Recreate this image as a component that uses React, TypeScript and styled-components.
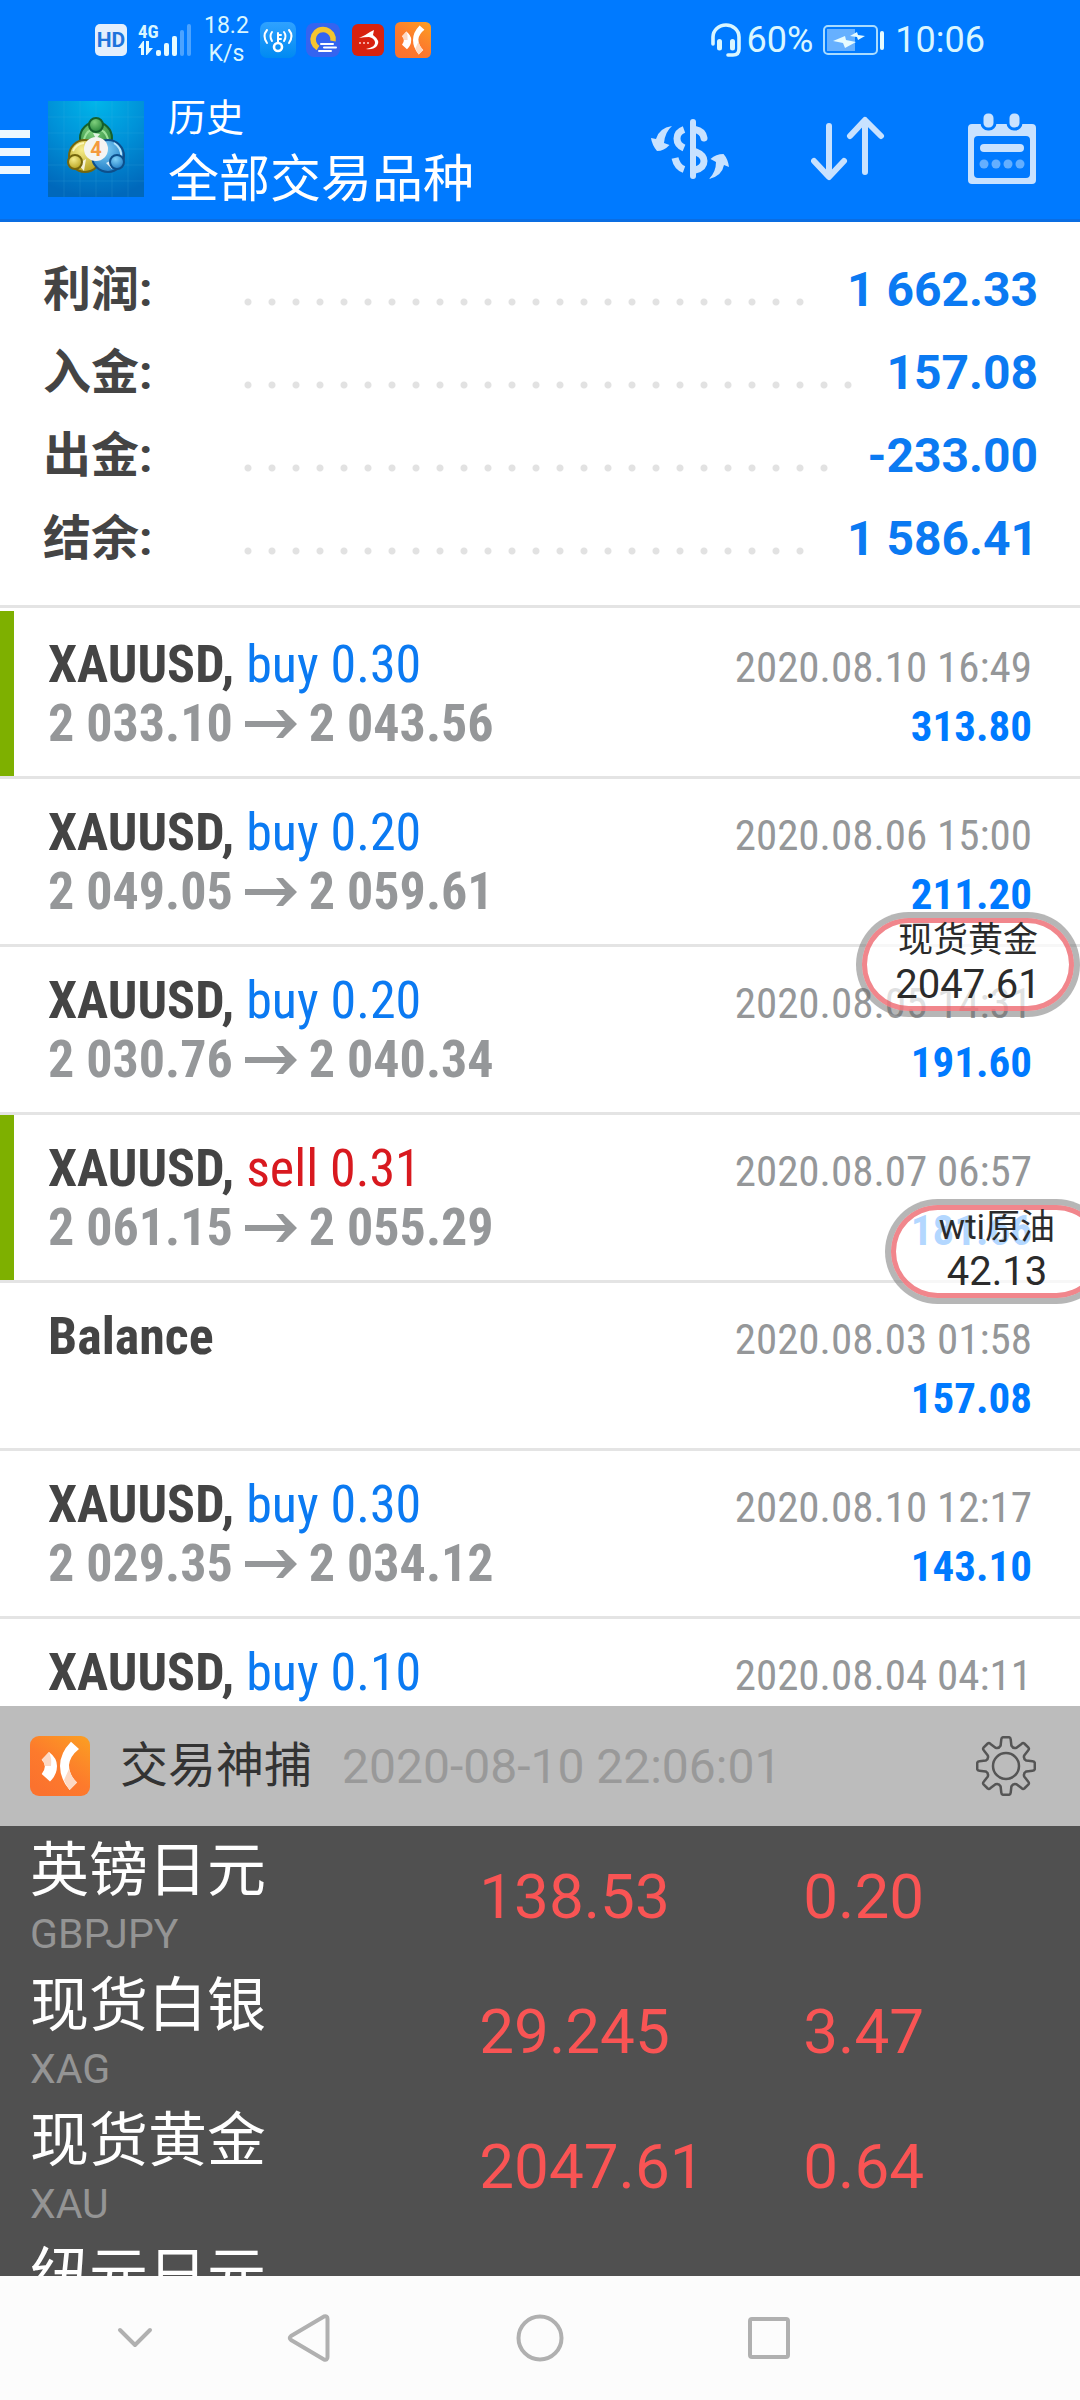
import React from 'react';
import styled, { createGlobalStyle } from 'styled-components';

const SANS = `Roboto, "Noto Sans CJK SC", sans-serif`;
const CONDENSED = `"Roboto Condensed", "Liberation Sans Narrow", Roboto, "Noto Sans CJK SC", sans-serif`;
const BLUE = '#007aff';

const Global = createGlobalStyle`
  * { box-sizing: border-box; }
  body { margin: 0; background: #fff; font-family: ${SANS}; }
  button { border: 0; padding: 0; margin: 0; background: none; font: inherit; color: inherit; display: flex; cursor: pointer; }
  svg { display: block; flex: none; }
`;

const Screen = styled.div`
  position: relative;
  display: flex;
  flex-direction: column;
  height: 100vh;
  overflow: hidden;
`;

/* ---------- status bar and app bar ---------- */

const TopArea = styled.header`
  flex: none;
  background: ${BLUE};
  color: #fff;
  border-bottom: 3px solid #0a6de2;
`;

const StatusBar = styled.div`
  display: flex;
  justify-content: space-between;
  align-items: center;
  height: 78px;
  padding: 2px 95px 0;
  color: #d9f6ff;
`;

const StatusGroup = styled.div<{ $gap: number }>`
  display: flex;
  align-items: center;
  gap: ${(p) => p.$gap}px;
`;

const HdBadge = styled.span`
  width: 32px;
  height: 32px;
  border-radius: 5px;
  background: #e3effd;
  color: #1e74dc;
  font-size: 21px;
  font-weight: 700;
  line-height: 32px;
  text-align: center;
`;

const Speed = styled.span`
  font-size: 23px;
  line-height: 28px;
  text-align: center;
`;

const StatusText = styled.span`
  font-size: 36px;
  line-height: 44px;
`;

const AppBar = styled.div`
  display: flex;
  align-items: center;
  height: 141px;
  padding-right: 43px;
`;

const MenuButton = styled.button`
  flex-direction: column;
  gap: 10px;
  width: 48px;
  padding-top: 6px;
`;

const MenuLine = styled.span`
  width: 30px;
  height: 8px;
  background: #ecf8ff;
`;

const Titles = styled.div`
  flex: 1;
  padding: 3px 0 0 24px;
`;

const Subtitle = styled.div`
  font-size: 38px;
  line-height: 60px;
`;

const Title = styled.h1`
  margin: 0;
  font-size: 51px;
  font-weight: 400;
  line-height: 64px;
`;

const Actions = styled.div`
  display: flex;
  align-items: center;
  gap: 82px;
`;

/* ---------- totals ---------- */

const Totals = styled.dl`
  flex: none;
  margin: 0;
  padding: 26px 42px 25px 43px;
  border-bottom: 3px solid #e4e4e4;
`;

const Total = styled.div`
  display: flex;
  align-items: center;
  height: 83px;
  font-size: 48px;
  font-weight: 700;
  line-height: 70px;
`;

const TotalLabel = styled.dt`
  width: 201px;
  color: #444;
`;

const Dots = styled.span`
  flex: 1;
  height: 8px;
  margin: 24px 28px 0 0;
  background: radial-gradient(circle at 4px 4px, #e2e2e2 3px, transparent 4px) 0 0 / 24px 8px repeat-x;
`;

const TotalValue = styled.dd`
  margin: 0;
  color: #0b7af2;
`;

/* ---------- deals ---------- */

const Deals = styled.ul`
  flex: 1 1 0;
  min-height: 0;
  margin: 0;
  padding: 3px 0 0;
  overflow: hidden;
  list-style: none;
  font-family: ${CONDENSED};
`;

const Deal = styled.li<{ $marked?: boolean }>`
  display: flex;
  justify-content: space-between;
  min-height: 168px;
  padding: 24px 48px 20px;
  border-bottom: 3px solid #e4e4e4;
  background: ${(p) => (p.$marked ? 'linear-gradient(#7eb000, #7eb000) 0 0 / 14px 100% no-repeat' : 'none')};
  line-height: 59px;
`;

const DealMain = styled.div`
  font-size: 52px;
  font-weight: 700;
  color: #444;
`;

const Side = styled.span<{ $sell?: boolean }>`
  font-weight: 400;
  color: ${(p) => (p.$sell ? '#d8191f' : '#0b7af2')};
`;

const Prices = styled.div`
  display: flex;
  align-items: center;
  gap: 12px;
  color: #959799;
`;

const DealSide = styled.div`
  padding-top: 3px;
  font-size: 43px;
  text-align: right;
`;

const DealTime = styled.time`
  display: block;
  color: #959799;
`;

const Profit = styled.div`
  font-weight: 700;
  color: ${BLUE};
`;

/* ---------- floating quotes ---------- */

const Floating = styled.button<{ $top: number; $right: number }>`
  position: absolute;
  top: ${(p) => p.$top}px;
  right: ${(p) => p.$right}px;
  flex-direction: column;
  align-items: center;
  width: 224px;
  height: 105px;
  border: 6px solid rgba(110, 110, 110, 0.5);
  border-radius: 53px;
  background: rgba(255, 255, 255, 0.7) padding-box;
  box-shadow: inset 0 0 0 5px rgba(232, 60, 70, 0.62);
  color: #2b2b2b;
`;

const FloatingName = styled.span`
  font-size: 35px;
  line-height: 46px;
`;

const FloatingPrice = styled.span`
  font-size: 40px;
  line-height: 42px;
`;

/* ---------- quotes panel ---------- */

const PanelBar = styled.div`
  flex: none;
  display: flex;
  align-items: center;
  height: 120px;
  padding: 0 44px 0 30px;
  background: #bcbcbc;
  font-size: 48px;
`;

const PanelTitle = styled.h2`
  margin: 0 30px;
  font-size: 48px;
  font-weight: 400;
  line-height: 68px;
  color: #333;
`;

const PanelTime = styled.time`
  flex: 1;
  color: #999;
`;

const QuotesView = styled.section`
  flex: none;
  height: 450px;
  overflow: hidden;
  background: #505050;
`;

const Quotes = styled.table`
  width: 100%;
  table-layout: fixed;
  border-collapse: collapse;
`;

const QuoteHead = styled.th`
  width: 44%;
  height: 135px;
  padding: 8px 0 0 30px;
  text-align: left;
  font-weight: 400;
`;

const QuoteName = styled.div`
  font-size: 59px;
  line-height: 73px;
  color: #fff;
`;

const QuoteCode = styled.div`
  height: 54px;
  font-size: 41px;
  line-height: 54px;
  color: #949494;
`;

const QuoteCell = styled.td<{ $width: number }>`
  width: ${(p) => p.$width}%;
  padding: 6px 0 0 4px;
  font-size: 62px;
  line-height: 72px;
  color: #f95454;
`;

/* ---------- navigation bar ---------- */

const NavBar = styled.nav`
  flex: none;
  display: grid;
  grid-template-columns: 193fr 231fr 231fr 227fr 198fr;
  align-items: center;
  height: 124px;
  background: #fcfcfc;
`;

const NavButton = styled.button<{ $end?: boolean }>`
  justify-content: ${(p) => (p.$end ? 'flex-end' : 'center')};
  padding-right: ${(p) => (p.$end ? 40 : 0)}px;
`;

/* ---------- drawings ---------- */

const Signal = () => (
  <svg width="55" height="36" viewBox="0 0 55 36">
    <text x="0" y="16" fontSize="19" fontWeight="700" fontFamily={CONDENSED} fill="#d9f6ff">4G</text>
    <g fill="#e6fbff">
      <path d="M0 26 L5 19 L6 19 V33 H3 V26Z M8 19 H11 V26 H15 L9 33 H8Z" />
      <rect x="18" y="28" width="5" height="6" rx="2" />
      <rect x="26" y="21" width="5" height="13" rx="2" />
      <rect x="34" y="14" width="5" height="20" rx="2" />
    </g>
    <g fill="#4ca3ff">
      <rect x="42" y="8" width="4" height="26" rx="2" />
      <rect x="49" y="2" width="4" height="32" rx="2" />
    </g>
  </svg>
);

const KeyWave = () => (
  <svg width="36" height="36" viewBox="0 0 36 36">
    <defs>
      <linearGradient id="wave" x1="0" y1="0" x2="0" y2="1">
        <stop offset="0" stopColor="#2fa2ff" />
        <stop offset="1" stopColor="#008af2" />
      </linearGradient>
    </defs>
    <rect width="36" height="36" rx="7" fill="url(#wave)" />
    <g fill="none" stroke="#fff" strokeWidth="2" strokeLinecap="round">
      <circle cx="18" cy="25" r="4" strokeWidth="2.6" />
      <path d="M18 21 V11 M18 13 H21 M18 17 H21" />
      <path d="M12 10 Q9 14 12 19 M24 10 Q27 14 24 19 M7 8 Q2 14 7 21 M29 8 Q34 14 29 21" />
    </g>
  </svg>
);

const RingApp = () => (
  <svg width="36" height="36" viewBox="0 0 36 36">
    <rect x="1" y="1" width="34" height="34" rx="8" fill="#3564f0" />
    <path d="M13 26 A10 10 0 1 1 28 19" fill="none" stroke="#f6c52f" strokeWidth="5.5" />
    <path d="M16 22 H28 M19 25.5 H31 M14 29 H26" stroke="#fff" strokeWidth="2" strokeLinecap="round" />
  </svg>
);

const RedApp = () => (
  <svg width="36" height="36" viewBox="0 0 36 36">
    <rect x="2" y="2" width="32" height="32" rx="6" fill="#d8220f" />
    <path d="M9 16 Q16 13 20 10 L24 8 L23 13 Q31 19 27 24 Q23 28 16 27 Q26 25 25 20 Q24 16 19 15 Q14 15 9 16Z" fill="#fff" />
    <path d="M9 21 H21" stroke="#f4a59c" strokeWidth="2" strokeDasharray="2 2" />
  </svg>
);

const CatchLogo = ({ size, id }: { size: number; id: string }) => (
  <svg width={size} height={size} viewBox="0 0 60 60">
    <defs>
      <linearGradient id={id} x1="1" y1="0" x2="0.3" y2="1">
        <stop offset="0" stopColor="#fba022" />
        <stop offset="0.6" stopColor="#fd7a2c" />
        <stop offset="1" stopColor="#fb722e" />
      </linearGradient>
    </defs>
    <rect width="60" height="60" rx="9" fill={`url(#${id})`} />
    <path d="M19 16 L11.7 23.7 Q18 30 11.7 38 L20 45.5 Q27 39 27 30 Q27 22 19 16Z" fill="#fff" />
    <path d="M19 16 L11.7 23.7 Q15 27 15 30 L21 30 Q22 22 19 16Z" fill="#fdd9c4" />
    <path d="M41 5.7 L49 13 Q40 20 39 29 Q39 39 47 46.5 L39.6 54 Q30 43 30 30 Q30 17 41 5.7Z" fill="#fff" />
    <path d="M39 33 Q41 41 47 46.5 L39.6 54 Q36 49 34 44Z" fill="#fdd9c4" />
  </svg>
);

const Headset = () => (
  <svg width="30" height="34" viewBox="0 0 30 34">
    <g fill="none" stroke="#d9f6ff" strokeLinecap="round">
      <path d="M2 21 V14 A13 12 0 0 1 28 14 V26 Q28 32 22 32 H17" strokeWidth="3.6" />
      <path d="M8.500 18.500 V25 M21.500 18.500 V25" strokeWidth="5" />
    </g>
  </svg>
);

const Battery = () => (
  <svg width="62" height="30" viewBox="0 0 62 30">
    <rect x="1" y="1" width="53" height="28" rx="4" fill="none" stroke="#a9dcff" strokeWidth="2" />
    <rect x="4" y="4" width="28" height="22" fill="#66b0ff" />
    <rect x="57" y="6" width="4" height="19" rx="2" fill="#e6fbff" />
    <path d="M10 16 L22 11 L23 15 L33 17 L22 23 L20 18Z M27 11 L34 7 L35 10 L42 11 L35 15 L34 12Z" fill="#e6fbff" />
  </svg>
);

const TraderLogo = () => (
  <svg width="96" height="96" viewBox="0 0 96 96">
    <defs>
      <radialGradient id="sky" cx="0.5" cy="0" r="1">
        <stop offset="0" stopColor="#00b6ea" />
        <stop offset="0.5" stopColor="#0091d8" />
        <stop offset="1" stopColor="#0068bb" />
      </radialGradient>
      <radialGradient id="green" cx="0.4" cy="0.3" r="0.8">
        <stop offset="0" stopColor="#7fd07c" />
        <stop offset="1" stopColor="#1b7c33" />
      </radialGradient>
      <radialGradient id="yellow" cx="0.4" cy="0.3" r="0.8">
        <stop offset="0" stopColor="#f6ec8a" />
        <stop offset="1" stopColor="#b09a14" />
      </radialGradient>
      <radialGradient id="blue" cx="0.4" cy="0.3" r="0.8">
        <stop offset="0" stopColor="#7fd0f7" />
        <stop offset="1" stopColor="#1674c0" />
      </radialGradient>
    </defs>
    <rect width="96" height="96" fill="url(#sky)" />
    <path d="M16 0V96M32 0V96M48 0V96M64 0V96M80 0V96M0 16H96M0 32H96M0 48H96M0 64H96M0 80H96" stroke="#4fc3ee" strokeOpacity="0.15" fill="none" />
    <g strokeWidth="2">
      <circle cx="48" cy="37" r="16" fill="url(#green)" stroke="#14602c" />
      <path d="M36 38 Q39 28 48 28 Q57 28 60 38" fill="none" stroke="#9be09a" />
      <circle cx="37" cy="55" r="16" fill="url(#yellow)" stroke="#75660d" />
      <path d="M25 50 Q28 43 36 42" fill="none" stroke="#fbf6b8" />
      <circle cx="60" cy="55" r="16" fill="url(#blue)" stroke="#0d4f8c" />
      <path d="M66 42 Q74 47 73 56" fill="none" stroke="#b8e6fb" />
      <path d="M30 63 L38 58 L36 70Z M58 62 L66 58 L64 68Z M45 32 L52 33 L48 38Z" fill="#fff" opacity="0.8" />
      <circle cx="48" cy="24" r="7" fill="url(#green)" stroke="#14602c" />
      <circle cx="27" cy="61" r="7" fill="url(#yellow)" stroke="#75660d" />
      <circle cx="69" cy="61" r="7" fill="url(#blue)" stroke="#0d4f8c" />
    </g>
    <circle cx="48" cy="48" r="12" fill="#f4f4f2" />
    <text x="48" y="55" fontSize="20" fontWeight="700" textAnchor="middle" fontFamily={SANS} fill="#f49a3c">4</text>
  </svg>
);

const DollarIcon = () => (
  <svg width="78" height="60" viewBox="0 0 78 60">
    <g fill="none" stroke="#c8e2ff" strokeWidth="7">
      <path d="M42 3 V57" strokeWidth="6" strokeLinecap="round" />
      <path d="M33 10.500 Q26 13 26 19.500 Q26 26 33 29 M24 39 Q26 48 33 50.500" />
      <path d="M44 10.500 Q52 12 53 19 " strokeLinecap="round" />
      <path d="M44 32.500 Q53 36 53 42 Q53 49 44 51" />
    </g>
    <path d="M21 7 Q8 9 5 20 L0 19 Q1 26 6 32 Q13 32 18.500 26 L13 24 Q14 13 21 7Z" fill="#c8e2ff" />
    <path d="M58 60 Q71 57 73 46 L78 48 Q77 40 72.500 35 Q65 35 59.500 40 L65 43 Q65 53 58 60Z" fill="#c8e2ff" />
  </svg>
);

const SortIcon = () => (
  <svg width="74" height="66" viewBox="0 0 74 66">
    <path d="M18 10 V60 M3 45 L18 61 L33 45 M54 56 V5 M39 20 L54 4 L70 20" fill="none" stroke="#c8e2ff" strokeWidth="6" strokeLinecap="round" strokeLinejoin="round" />
  </svg>
);

const CalendarIcon = () => (
  <svg width="70" height="72" viewBox="0 0 70 72">
    <path fillRule="evenodd" d="M5 11 H65 Q69 11 69 15 V67 Q69 71 65 71 H5 Q1 71 1 67 V15 Q1 11 5 11Z M11 23 Q7 23 7 27 V61 Q7 65 11 65 H59 Q63 65 63 61 V27 Q63 23 59 23Z" fill="#c8e2ff" />
    <g fill="#c8e2ff" stroke={BLUE} strokeWidth="3">
      <rect x="15" y="-1" width="13" height="17" rx="6" />
      <rect x="41" y="-1" width="13" height="17" rx="6" />
    </g>
    <rect x="13" y="31" width="44" height="8" rx="4" fill="#c8e2ff" />
    <g fill="#64afff">
      <circle cx="17" cy="51" r="4.500" />
      <circle cx="29" cy="51" r="4.500" />
      <circle cx="41" cy="51" r="4.500" />
      <circle cx="53" cy="51" r="4.500" />
    </g>
  </svg>
);

const RangeArrow = () => (
  <svg width="52" height="30" viewBox="0 0 52 30">
    <path d="M0 12 H40 L31 1 H38 L52 15 L38 29 H31 L40 18 H0Z" fill="#959799" />
  </svg>
);

const gearPath = () => {
  const at = (r: number, deg: number) => {
    const a = (deg * Math.PI) / 180;
    return `${(30 + r * Math.sin(a)).toFixed(1)} ${(30 - r * Math.cos(a)).toFixed(1)}`;
  };
  const teeth = [0, 45, 90, 135, 180, 225, 270, 315].map(
    (d) => `L${at(21, d - 15)} L${at(27, d - 10)} Q${at(29, d - 9)} ${at(29, d - 6)} L${at(29, d + 6)} Q${at(29, d + 9)} ${at(27, d + 10)} L${at(21, d + 15)} Q${at(18.5, d + 22.5)} ${at(21, d + 30)}`,
  );
  return `M${teeth.join(' ').slice(1)}Z`;
};

const GearIcon = () => (
  <svg width="60" height="60" viewBox="0 0 60 60">
    <g fill="none" stroke="#555" strokeWidth="2.500" strokeLinejoin="round">
      <path d={gearPath()} />
      <circle cx="30" cy="30" r="13" />
    </g>
  </svg>
);

/* ---------- data ---------- */

const totals = [
  ['利润:', '1 662.33'],
  ['入金:', '157.08'],
  ['出金:', '-233.00'],
  ['结余:', '1 586.41'],
];

type DealData = {
  symbol: string;
  side?: string;
  sell?: boolean;
  from?: string;
  to?: string;
  time: string;
  profit?: string;
  marked?: boolean;
};

const deals: DealData[] = [
  { symbol: 'XAUUSD,', side: 'buy 0.30', from: '2 033.10', to: '2 043.56', time: '2020.08.10 16:49', profit: '313.80', marked: true },
  { symbol: 'XAUUSD,', side: 'buy 0.20', from: '2 049.05', to: '2 059.61', time: '2020.08.06 15:00', profit: '211.20' },
  { symbol: 'XAUUSD,', side: 'buy 0.20', from: '2 030.76', to: '2 040.34', time: '2020.08.05 14:31', profit: '191.60' },
  { symbol: 'XAUUSD,', side: 'sell 0.31', sell: true, from: '2 061.15', to: '2 055.29', time: '2020.08.07 06:57', profit: '181.66', marked: true },
  { symbol: 'Balance', time: '2020.08.03 01:58', profit: '157.08' },
  { symbol: 'XAUUSD,', side: 'buy 0.30', from: '2 029.35', to: '2 034.12', time: '2020.08.10 12:17', profit: '143.10' },
  { symbol: 'XAUUSD,', side: 'buy 0.10', time: '2020.08.04 04:11' },
];

const quotes = [
  ['英镑日元', 'GBPJPY', '138.53', '0.20'],
  ['现货白银', 'XAG', '29.245', '3.47'],
  ['现货黄金', 'XAU', '2047.61', '0.64'],
  ['纽元日元', '', '', ''],
];

export default function App() {
  return (
    <Screen>
      <Global />
      <TopArea>
        <StatusBar>
          <StatusGroup $gap={11}>
            <HdBadge>HD</HdBadge>
            <Signal />
            <Speed>18.2<br />K/s</Speed>
            <StatusGroup $gap={9}>
              <KeyWave />
              <RingApp />
              <RedApp />
              <CatchLogo size={36} id="catchSmall" />
            </StatusGroup>
          </StatusGroup>
          <StatusGroup $gap={10}>
            <StatusGroup $gap={6}>
              <Headset />
              <StatusText>60%</StatusText>
            </StatusGroup>
            <Battery />
            <StatusText>10:06</StatusText>
          </StatusGroup>
        </StatusBar>
        <AppBar>
          <MenuButton aria-label="Menu">
            <MenuLine />
            <MenuLine />
            <MenuLine />
          </MenuButton>
          <TraderLogo />
          <Titles>
            <Subtitle>历史</Subtitle>
            <Title>全部交易品种</Title>
          </Titles>
          <Actions>
            <button aria-label="Symbols"><DollarIcon /></button>
            <button aria-label="Sort"><SortIcon /></button>
            <button aria-label="Period"><CalendarIcon /></button>
          </Actions>
        </AppBar>
      </TopArea>

      <Totals>
        {totals.map(([label, value]) => (
          <Total key={label}>
            <TotalLabel>{label}</TotalLabel>
            <Dots />
            <TotalValue>{value}</TotalValue>
          </Total>
        ))}
      </Totals>

      <Deals>
        {deals.map((d) => (
          <Deal key={d.time} $marked={d.marked}>
            <DealMain>
              <div>
                {d.symbol} {d.side && <Side $sell={d.sell}>{d.side}</Side>}
              </div>
              {d.from && (
                <Prices>
                  {d.from}
                  <RangeArrow />
                  {d.to}
                </Prices>
              )}
            </DealMain>
            <DealSide>
              <DealTime>{d.time}</DealTime>
              {d.profit && <Profit>{d.profit}</Profit>}
            </DealSide>
          </Deal>
        ))}
      </Deals>

      <Floating $top={912} $right={0}>
        <FloatingName>现货黄金</FloatingName>
        <FloatingPrice>2047.61</FloatingPrice>
      </Floating>
      <Floating $top={1199} $right={-29}>
        <FloatingName>wti原油</FloatingName>
        <FloatingPrice>42.13</FloatingPrice>
      </Floating>

      <PanelBar>
        <CatchLogo size={60} id="catchLarge" />
        <PanelTitle>交易神捕</PanelTitle>
        <PanelTime>2020-08-10 22:06:01</PanelTime>
        <button aria-label="Settings"><GearIcon /></button>
      </PanelBar>
      <QuotesView>
        <Quotes>
          <tbody>
            {quotes.map(([name, code, price, change]) => (
              <tr key={name}>
                <QuoteHead scope="row">
                  <QuoteName>{name}</QuoteName>
                  <QuoteCode>{code}</QuoteCode>
                </QuoteHead>
                <QuoteCell $width={30}>{price}</QuoteCell>
                <QuoteCell $width={26}>{change}</QuoteCell>
              </tr>
            ))}
          </tbody>
        </Quotes>
      </QuotesView>

      <NavBar>
        <NavButton $end aria-label="Hide">
          <svg width="36" height="22" viewBox="0 0 36 22">
            <path d="M3 3 L18 18 L33 3" fill="none" stroke="#b0b0b0" strokeWidth="4" strokeLinecap="round" strokeLinejoin="round" />
          </svg>
        </NavButton>
        <NavButton aria-label="Back">
          <svg width="44" height="48" viewBox="0 0 44 48">
            <path d="M37 2.500 Q40.500 1.500 40.500 5 V43 Q40.500 46.500 37 45.500 L4 26 Q1.500 24 4 22Z" fill="none" stroke="#b0b0b0" strokeWidth="4" strokeLinejoin="round" />
          </svg>
        </NavButton>
        <NavButton aria-label="Home">
          <svg width="48" height="48" viewBox="0 0 48 48">
            <circle cx="24" cy="24" r="21.500" fill="none" stroke="#b0b0b0" strokeWidth="4" />
          </svg>
        </NavButton>
        <NavButton aria-label="Recent">
          <svg width="42" height="42" viewBox="0 0 42 42">
            <rect x="2" y="2" width="38" height="38" rx="2" fill="none" stroke="#b0b0b0" strokeWidth="4" />
          </svg>
        </NavButton>
      </NavBar>
    </Screen>
  );
}
